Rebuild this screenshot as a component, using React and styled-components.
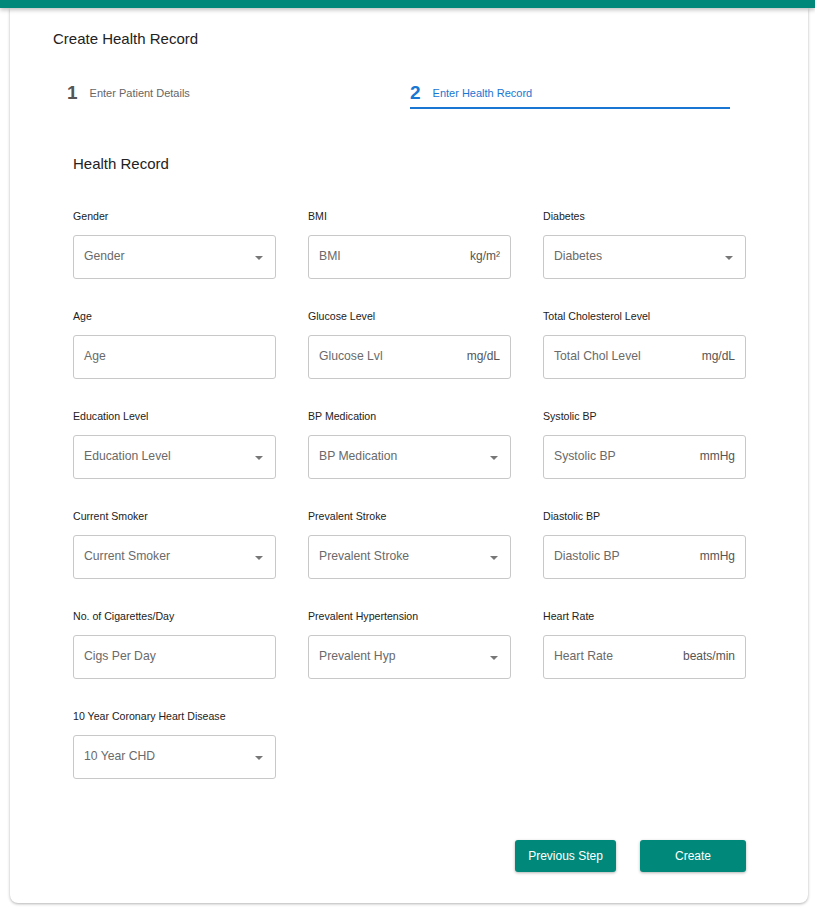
import React from 'react';
import styled, { createGlobalStyle } from 'styled-components';

const GlobalStyle = createGlobalStyle`
  html, body { margin: 0; padding: 0; background: #fff; }
  body { font-family: "Liberation Sans", Arial, sans-serif; color: #222; }
`

const TopBar = styled.div`
  height: 8px;
  background: #00897b;
  box-shadow: 0 2px 4px rgba(0,0,0,0.25);
  position: relative;
  z-index: 1;
`

const Page = styled.div`
  padding: 0 7px 4px 10px;
`

const Card = styled.div`
  background: #fff;
  border-radius: 0 0 8px 8px;
  box-shadow: 0 1px 3px rgba(0,0,0,0.3);
  padding: 22px 62px 31px 43px;
`

const Title = styled.h1`
  font-size: 15px;
  font-weight: 400;
  margin: 0;
  color: #222;
  line-height: 18px;
`

const Stepper = styled.div`
  display: grid;
  grid-template-columns: 343px 320px;
  margin: 31px 0 0 14px;
`

const Step = styled.div`
  display: flex;
  align-items: center;
  gap: 12px;
  height: 28px;
  border-bottom: 2px solid ${p => (p.active ? '#1976d2' : 'transparent')};
  color: ${p => (p.active ? '#1976d2' : '#666')};
`

const StepNum = styled.span`
  font-size: 19px;
  font-weight: 700;
  color: ${p => (p.active ? '#1976d2' : '#555')};
`

const StepLabel = styled.span`
  font-size: 11px;
`

const Section = styled.div`
  padding: 0 0 0 20px;
`

const SectionTitle = styled.h2`
  font-size: 15px;
  font-weight: 400;
  margin: 46px 0 0;
  line-height: 18px;
  color: #222;
`

const Grid = styled.div`
  display: grid;
  grid-template-columns: repeat(3, 203px);
  column-gap: 32px;
  row-gap: 30px;
  margin-top: 36px;
`

const Field = styled.div`
  display: flex;
  flex-direction: column;
`

const Label = styled.label`
  font-size: 10.6px;
  color: #222;
  line-height: 14px;
  margin-bottom: 12px;
`

const Box = styled.div`
  height: 44px;
  box-sizing: border-box;
  border: 1px solid #c8c8c8;
  border-radius: 3px;
  display: flex;
  align-items: center;
  justify-content: space-between;
  padding: 0 10px 2px;
  font-size: 12.2px;
  color: #6a6a6a;
`

const Unit = styled.span`
  color: #555;
  font-size: 12px;
`

const Caret = styled.span`
  width: 0;
  height: 0;
  border-left: 4px solid transparent;
  border-right: 4px solid transparent;
  border-top: 4px solid #777;
  margin-right: 2px;
  margin-top: 4px;
`

const Actions = styled.div`
  display: flex;
  justify-content: flex-end;
  gap: 24px;
  margin-top: 61px;
`

const Button = styled.button`
  background: #00897b;
  color: #fff;
  border: none;
  border-radius: 3px;
  height: 32px;
  width: ${p => p.w}px;
  font-family: "Liberation Sans", Arial, sans-serif;
  font-size: 12px;
  box-shadow: 0 1px 3px rgba(0,0,0,0.3);
`

const fields = [
  { label: 'Gender', ph: 'Gender', select: true },
  { label: 'BMI', ph: 'BMI', unit: 'kg/m²' },
  { label: 'Diabetes', ph: 'Diabetes', select: true },
  { label: 'Age', ph: 'Age' },
  { label: 'Glucose Level', ph: 'Glucose Lvl', unit: 'mg/dL' },
  { label: 'Total Cholesterol Level', ph: 'Total Chol Level', unit: 'mg/dL' },
  { label: 'Education Level', ph: 'Education Level', select: true },
  { label: 'BP Medication', ph: 'BP Medication', select: true },
  { label: 'Systolic BP', ph: 'Systolic BP', unit: 'mmHg' },
  { label: 'Current Smoker', ph: 'Current Smoker', select: true },
  { label: 'Prevalent Stroke', ph: 'Prevalent Stroke', select: true },
  { label: 'Diastolic BP', ph: 'Diastolic BP', unit: 'mmHg' },
  { label: 'No. of Cigarettes/Day', ph: 'Cigs Per Day' },
  { label: 'Prevalent Hypertension', ph: 'Prevalent Hyp', select: true },
  { label: 'Heart Rate', ph: 'Heart Rate', unit: 'beats/min' },
  { label: '10 Year Coronary Heart Disease', ph: '10 Year CHD', select: true },
]

export default function App() {
  return (
    <>
      <GlobalStyle />
      <TopBar />
      <Page>
        <Card>
          <Title>Create Health Record</Title>
          <Stepper>
            <Step>
              <StepNum>1</StepNum>
              <StepLabel>Enter Patient Details</StepLabel>
            </Step>
            <Step active>
              <StepNum active>2</StepNum>
              <StepLabel>Enter Health Record</StepLabel>
            </Step>
          </Stepper>
          <Section>
            <SectionTitle>Health Record</SectionTitle>
            <Grid>
              {fields.map(f => (
                <Field key={f.label}>
                  <Label>{f.label}</Label>
                  <Box>
                    <span>{f.ph}</span>
                    {f.unit && <Unit>{f.unit}</Unit>}
                    {f.select && <Caret />}
                  </Box>
                </Field>
              ))}
            </Grid>
            <Actions>
              <Button w={101}>Previous Step</Button>
              <Button w={106}>Create</Button>
            </Actions>
          </Section>
        </Card>
      </Page>
    </>
  );
}
